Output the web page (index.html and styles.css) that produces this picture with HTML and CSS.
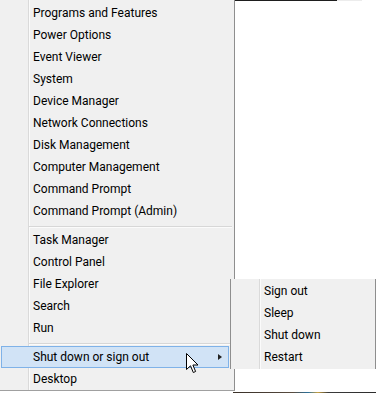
FILE: index.html
```html
<!DOCTYPE html>
<html lang="en">
<head>
      <meta charset="UTF-8">
      <title>Quick Link menu</title>
      <link rel="stylesheet" href="styles.css">
</head>
<body>
      <div class="screen">
            <div class="menu">
                  <div class="item">Programs and Features</div>
                  <div class="item">Power Options</div>
                  <div class="item">Event Viewer</div>
                  <div class="item">System</div>
                  <div class="item">Device Manager</div>
                  <div class="item">Network Connections</div>
                  <div class="item">Disk Management</div>
                  <div class="item">Computer Management</div>
                  <div class="item">Command Prompt</div>
                  <div class="item">Command Prompt (Admin)</div>
                  <div class="separador"></div>
                  <div class="item">Task Manager</div>
                  <div class="item">Control Panel</div>
                  <div class="item">File Explorer</div>
                  <div class="item">Search</div>
                  <div class="item">Run</div>
                  <div class="separador"></div>
                  <div class="item ativo">Shut down or sign out<span class="seta"></span></div>
                  <div class="item">Desktop</div>
            </div>

            <div class="fundo">
                  <div class="faixa-topo">
                        <span class="escuro"></span>
                        <span class="claro"></span>
                  </div>
                  <div class="branco"></div>
                  <div class="faixa-baixo"></div>
            </div>

            <div class="submenu">
                  <div class="item">Sign out</div>
                  <div class="item">Sleep</div>
                  <div class="item">Shut down</div>
                  <div class="item">Restart</div>
            </div>

            <svg class="cursor" width="13" height="21" viewBox="0 0 13 21">
                  <path d="M0.5 0.5 L0.5 16.5 L4.5 12.8 L7.3 19.5 L9.6 18.5 L6.9 12 L12 12 Z" fill="white" stroke="black" stroke-width="1"/>
            </svg>
      </div>
</body>
</html>
```

FILE: styles.css
```css
*{
      padding: 0;
      margin: 0;
      box-sizing: border-box;
}

body{
      background-color: white;
      font-family: Roboto, 'Noto Sans', sans-serif;
      font-size: 12px;
      color: #000;
}

.screen{
      position: relative;
      display: flex;
      width: 376px;
      height: 393px;
      overflow: hidden;
}

.menu{
      width: 235px;
      height: 391px;
      padding-top: 2px;
      background-color: #f0f0f0;
      background-image: linear-gradient(to right, transparent 28px, #dadada 28px, #dadada 29px, #fbfbfb 29px, #fbfbfb 30px, transparent 30px);
      border-right: 1px solid #8e8e8e;
      border-bottom: 1px solid #a0a0a0;
}

.item{
      position: relative;
      height: 22px;
      line-height: 22px;
      padding-left: 33px;
      white-space: nowrap;
}

.separador{
      height: 7px;
      padding-top: 4px;
      margin-left: 29px;
      margin-right: 2px;
}

.separador::before{
      content: "";
      display: block;
      height: 1px;
      background-color: #d7d7d7;
      border-bottom: 1px solid #fbfbfb;
      box-sizing: content-box;
}

.ativo{
      margin-left: 1px;
      margin-right: 5px;
      padding-left: 31px;
      line-height: 20px;
      background-color: #d1e3f6;
      border: 1px solid #7fb2e8;
}

.seta{
      position: absolute;
      right: 6px;
      top: 7px;
      width: 0;
      height: 0;
      border-top: 3.5px solid transparent;
      border-bottom: 3.5px solid transparent;
      border-left: 4px solid #222;
}

.fundo{
      flex: 1;
      display: flex;
      flex-direction: column;
}

.faixa-topo{
      display: flex;
      height: 1px;
}

.faixa-topo .escuro{
      width: 102px;
      background-color: #1e1e1e;
}

.faixa-topo .claro{
      width: 25px;
      background-color: #ececec;
}

.branco{
      flex: 1;
}

.faixa-baixo{
      height: 1px;
      margin-left: -2px;
      background: linear-gradient(to right, #3a3128 0, #4b4036 40px, #5a4c3f 60px, #2a6f9a 75px, #c8a040 85px, #3b3b3b 95px, #2c2c2c 141px);
}

.submenu{
      position: absolute;
      left: 230px;
      top: 279px;
      width: 146px;
      height: 90px;
      padding-top: 1px;
      background-color: #f0f0f0;
      background-image: linear-gradient(to right, transparent 28px, #dadada 28px, #dadada 29px, #fbfbfb 29px, #fbfbfb 30px, transparent 30px);
      border-left: 1px solid #8e8e8e;
      border-right: 1px solid #8e8e8e;
}

.cursor{
      position: absolute;
      left: 186px;
      top: 353px;
}
```
